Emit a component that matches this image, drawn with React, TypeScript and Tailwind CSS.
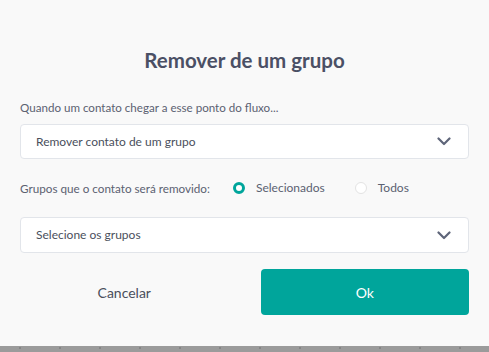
import React, { useState } from 'react';

const Chevron = () => (
  <svg width="14" height="9" viewBox="0 0 14 9" fill="none" className="shrink-0">
    <path d="M1.5 1.5 7 7l5.5-5.5" stroke="#5e6579" strokeWidth="2.2" strokeLinecap="round" strokeLinejoin="round" />
  </svg>
);

const SelectBox = ({ label, h }: { label: string; h: string }) => (
  <button
    type="button"
    className={`flex w-full items-center justify-between rounded-[4px] border border-[#e2e5ea] bg-white pl-[15px] pr-[17px] text-left text-[12px] text-[#4a4f5c] ${h}`}
  >
    <span>{label}</span>
    <Chevron />
  </button>
);

const Radio = ({ on }: { on: boolean }) => (
  <span
    className={`h-[12px] w-[12px] rounded-full bg-white ${on ? 'border-[3.5px] border-[#00a59b]' : 'border border-[#e3e3e3]'}`}
  />
);

export default function App() {
  const [scope, setScope] = useState<'sel' | 'all'>('sel');

  return (
    <div className="flex h-[352px] w-[489px] flex-col overflow-hidden bg-[#f9f9f9] font-['Lato','Open_Sans',sans-serif]">
      <div className="flex flex-1 flex-col px-5">
        <h1 className="mt-[46px] text-center text-[20.5px] font-bold leading-[28px] text-[#4b5065]">Remover de um grupo</h1>

        <p className="mt-[26px] text-[11.6px] leading-[16px] text-[#5b6171]">Quando um contato chegar a esse ponto do fluxo...</p>

        <div className="mt-[8px]">
          <SelectBox label="Remover contato de um grupo" h="h-[35px]" />
        </div>

        <div className="mt-[21px] flex items-center text-[12px] leading-[16px] text-[#5b6171]">
          <span className="text-[11.7px]">Grupos que o contato será removido:</span>
          <label className="ml-[23px] flex cursor-pointer items-center" onClick={() => setScope('sel')}>
            <Radio on={scope === 'sel'} />
            <span className="ml-[11px]">Selecionados</span>
          </label>
          <label className="ml-[30px] flex cursor-pointer items-center" onClick={() => setScope('all')}>
            <Radio on={scope === 'all'} />
            <span className="ml-[11px]">Todos</span>
          </label>
        </div>

        <div className="mt-[21px]">
          <SelectBox label="Selecione os grupos" h="h-[36px]" />
        </div>

        <div className="mt-[16px] grid grid-cols-2 gap-[32px]">
          <button type="button" className="h-[46px] text-[14px] text-[#4a4f5c]">
            Cancelar
          </button>
          <button type="button" className="h-[46px] rounded-[4px] bg-[#00a59b] text-[14px] text-white">
            Ok
          </button>
        </div>
      </div>

      <div className="h-[6px] shrink-0 overflow-hidden bg-[#9b9b9b]">
        <div className="flex h-full">
          {Array.from({ length: 13 }).map((_, i) => (
            <div key={i} className="flex w-[40px] shrink-0 justify-center">
              <span className="mt-[1px] h-[2px] w-[2px] rounded-full bg-[#7f7f7f]" />
            </div>
          ))}
        </div>
      </div>
    </div>
  );
}
